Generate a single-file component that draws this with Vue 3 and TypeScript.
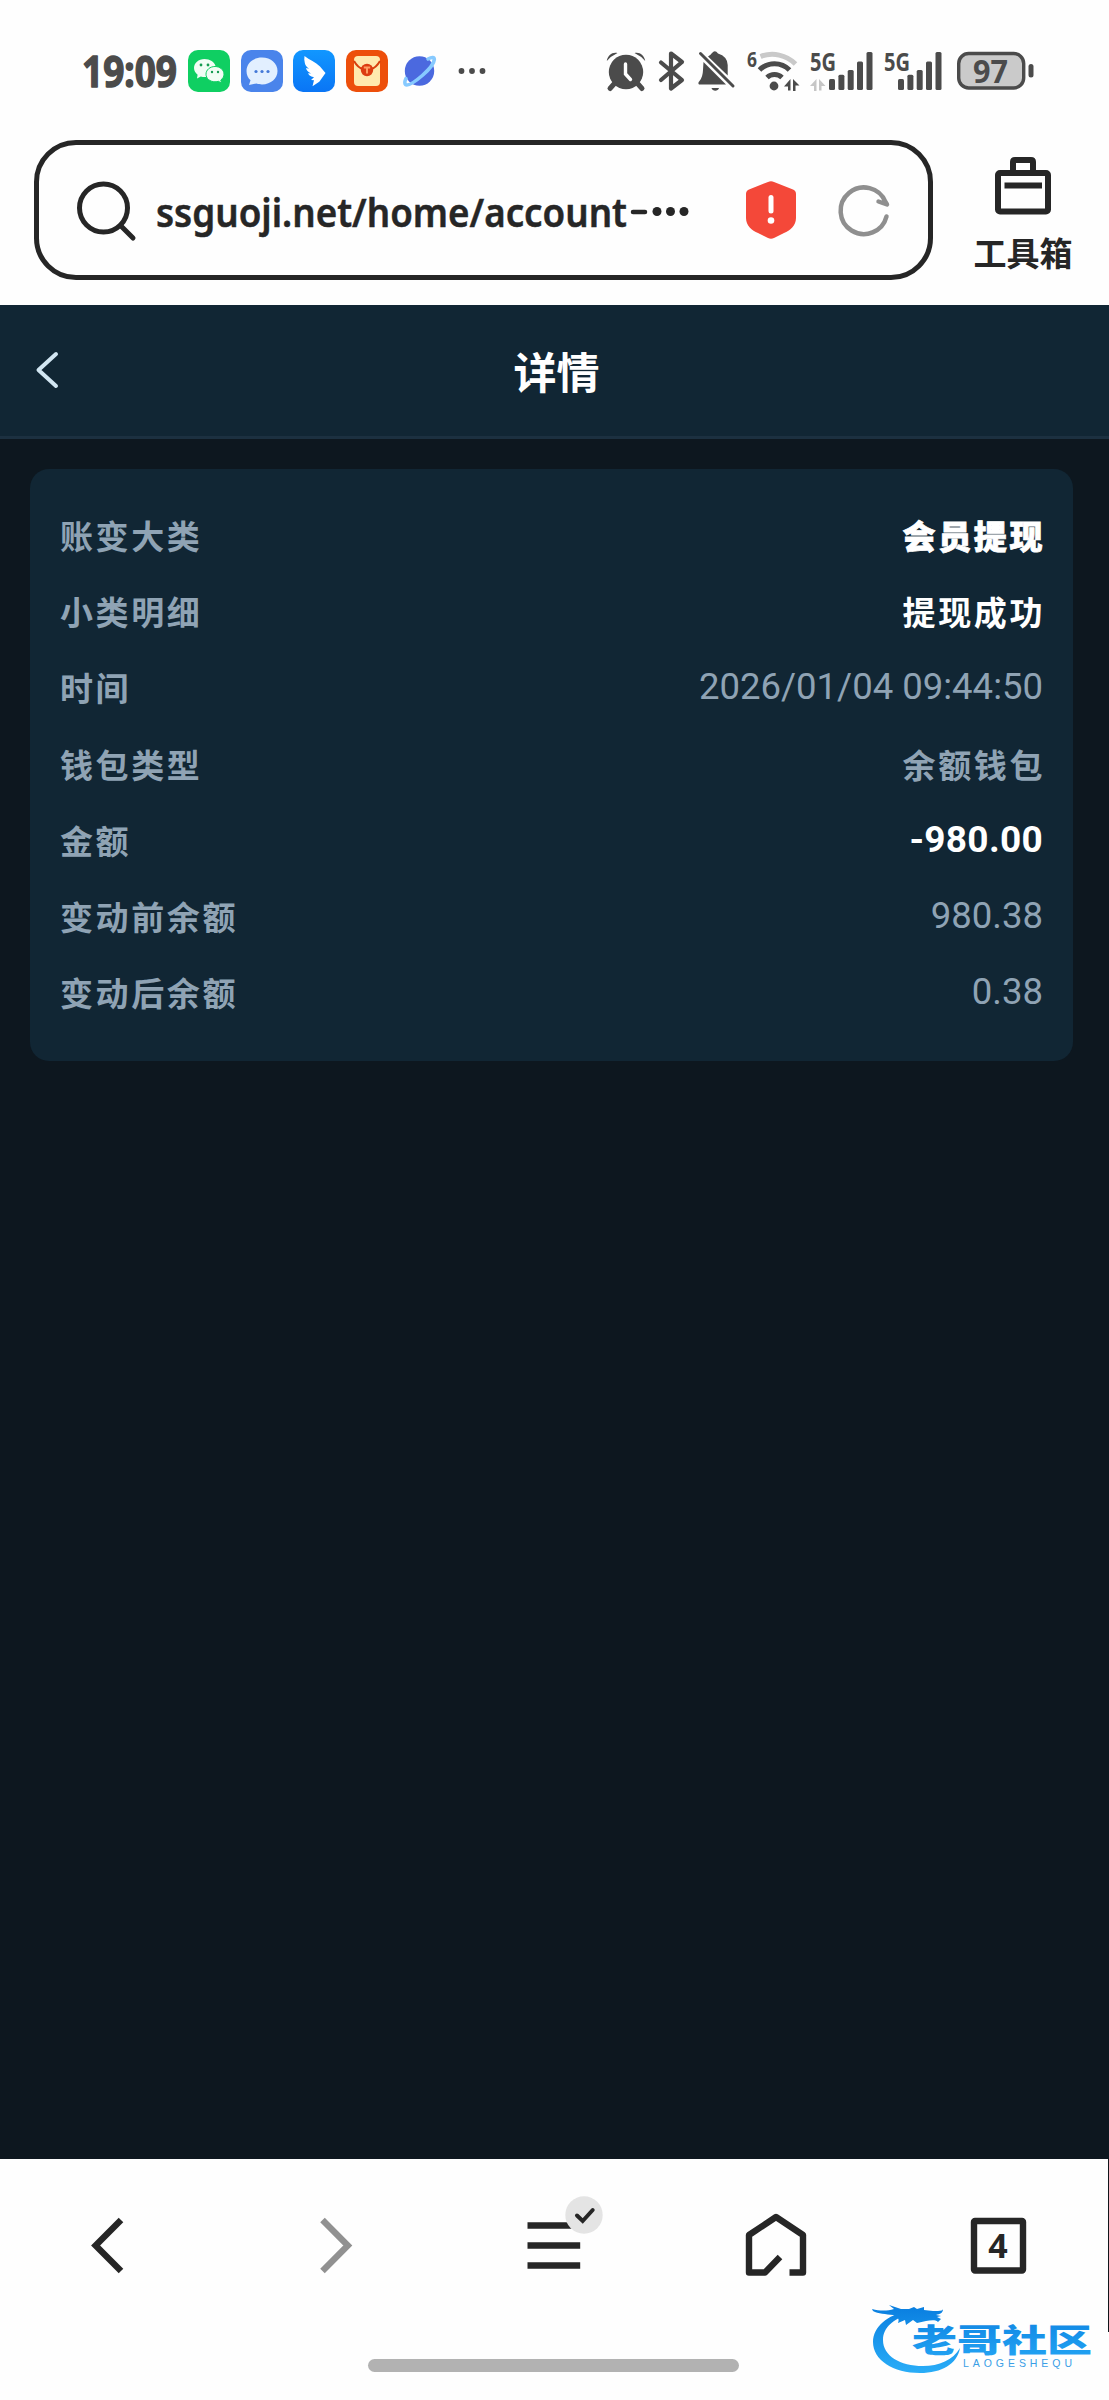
<script setup lang="ts">
interface DetailRow { label: string; value: string; kind: 'text' | 'num'; tone?: 'heavy' | 'strong' }

const rows: DetailRow[] = [
  { label: '账变大类', value: '会员提现', kind: 'text', tone: 'heavy' },
  { label: '小类明细', value: '提现成功', kind: 'text', tone: 'strong' },
  { label: '时间', value: '2026/01/04 09:44:50', kind: 'num' },
  { label: '钱包类型', value: '余额钱包', kind: 'text' },
  { label: '金额', value: '-980.00', kind: 'num', tone: 'strong' },
  { label: '变动前余额', value: '980.38', kind: 'num' },
  { label: '变动后余额', value: '0.38', kind: 'num' },
]

// signal bars: x offset and top edge
const bars = [
  { x: 0, y: 29 },
  { x: 9.4, y: 24.7 },
  { x: 18.7, y: 20 },
  { x: 28, y: 11.5 },
  { x: 37.5, y: 2 },
]
</script>

<template>
  <div class="phone">
    <div class="status">
      <svg class="clock" width="105" height="42" viewBox="0 0 105 42">
        <text x="-1" y="36.500" textLength="95" lengthAdjust="spacingAndGlyphs">19:09</text>
      </svg>
      <div class="apps">
        <svg width="42" height="42" viewBox="0 0 42 42">
          <rect width="42" height="42" rx="10" fill="#0fcf62" />
          <path d="M16.500 9C10.500 9 6 13 6 18c0 3 1.500 5 3.600 6.700L9 28.500l3.800-2c4 1.200 8 .5 10.500-1.500 4-2.500 4.700-6 4.200-9C26.500 12 22 9 16.500 9z" fill="#f2fdf5" />
          <path d="M27 16.500c-5 0-9 3.400-9 7.700s4 7.600 9 7.600c1.200 0 2.400-.2 3.400-.5l3.200 1.900-.8-3.200c2-1.400 3.200-3.400 3.200-5.800 0-4.300-4-7.700-9-7.700z" fill="#f2fdf5" stroke="#0fcf62" stroke-width="1" />
          <g fill="#159b50">
            <circle cx="13" cy="15" r="1.400" /><circle cx="20" cy="15" r="1.400" />
            <circle cx="24" cy="22" r="1.200" /><circle cx="30" cy="22" r="1.200" />
          </g>
        </svg>
        <svg width="42" height="42" viewBox="0 0 42 42">
          <rect width="42" height="42" rx="10" fill="#4a84eb" />
          <path d="M21 7.500C12 7.500 5.500 13.500 5.500 21c0 4 1.500 7 4 9.300L8 35l7.500-1.500c2 .7 3.700.9 5.500.9 9 0 15.500-6 15.500-13.400S30 7.500 21 7.500z" fill="#e2efff" />
          <g fill="#4478d8"><circle cx="15" cy="21.500" r="1.600" /><circle cx="21" cy="21.500" r="1.600" /><circle cx="27" cy="21.500" r="1.600" /></g>
        </svg>
        <svg width="42" height="42" viewBox="0 0 42 42">
          <defs>
            <linearGradient id="ding" x1="0" y1="0" x2="0" y2="1">
              <stop offset="0" stop-color="#1197ff" /><stop offset="1" stop-color="#0a75f5" />
            </linearGradient>
          </defs>
          <rect width="42" height="42" rx="10" fill="url(#ding)" />
          <path d="M11.500 6c5 4 11 6 15.500 10.500l5.500 6.500-6 8.500-1 .8-6 4 1.500-6-3-.3 3-2.800c-4-1-5.500-2.500-6-4l3 .3c-3-1.500-4.700-3.500-5-5.500l3 .8c-2.700-2-4-4-4.200-6-.6-2.300-.7-4.500-.3-6.800z" fill="#fff" />
        </svg>
        <svg width="42" height="42" viewBox="0 0 42 42">
          <rect width="42" height="42" rx="10" fill="#ed4f0b" />
          <rect x="8" y="6" width="26" height="30" rx="4" fill="#ffe9ae" />
          <path d="M8 11q4 7 9 8M34 11q-4 7-9 8" stroke="#d8400e" stroke-width="2" fill="none" />
          <circle cx="21" cy="20" r="6.200" fill="#dc3c10" />
          <path d="M17.800 17.500h6.400M21 17.500v6" stroke="#ff9d61" stroke-width="2" />
        </svg>
        <svg width="42" height="42" viewBox="0 0 42 42">
          <circle cx="20.500" cy="21" r="14.700" fill="#4b69df" />
          <path d="M29 9c4-2.200 6.300-2 6.300.5-.3 4-6.300 11-12 16-7 6-14.300 11-16.800 9-1.500-1.600-.4-4.200.5-6" fill="none" stroke="#87caff" stroke-width="3.600" stroke-linecap="round" />
        </svg>
        <svg width="42" height="42" viewBox="0 0 42 42" fill="#4b4b4b">
          <circle cx="10.500" cy="21" r="2.900" /><circle cx="21" cy="21" r="2.900" /><circle cx="31.500" cy="21" r="2.900" />
        </svg>
      </div>

      <div class="sys">
        <svg width="40" height="42" viewBox="0 0 40 42">
          <circle cx="20" cy="22" r="17.200" />
          <path d="M0.800 11C1.500 5 7 1.500 11.500 3Q5 6 .8 11zM39.200 11C38.500 5 33 1.500 28.500 3Q35 6 39.200 11z" />
          <path d="M8 34l-4 4.500M32 34l4 4.500" class="line" stroke-width="5" />
          <path d="M19.500 14v10l5 5.500" fill="none" stroke="#fff" stroke-width="3.400" stroke-linecap="round" />
        </svg>
        <svg class="bt" width="28" height="42" viewBox="0 0 28 42">
          <path d="M3 12.500L24 30 13 38.500V3.500L24 12 3 30" class="line" stroke-width="4.200" stroke-linejoin="round" />
        </svg>
        <svg class="bell" width="38" height="42" viewBox="0 0 38 42">
          <path d="M10 6.500Q13 4.500 14 3Q17-.5 20 3.500Q29.500 6.500 29.700 15V25.500z" />
          <path d="M5.500 12L28 34.500H1Q-.5 33 1.500 31Q4.800 27 5 20z" />
          <path d="M13.500 38h7.500c-1 3.500-6.500 3.500-7.500 0z" />
          <path d="M2.500 3.500L35 36" class="line" stroke-width="3" />
        </svg>
        <svg class="wifi" width="54" height="42" viewBox="0 0 54 42">
          <text x="0" y="17" font-size="22" textLength="10" lengthAdjust="spacingAndGlyphs">6</text>
          <path d="M13.500 6.500a33 33 0 0 1 35 7.500" fill="none" stroke="#c9c9c9" stroke-width="5" />
          <path d="M12.500 20a21 21 0 0 1 30 0" class="butt" stroke-width="5" />
          <path d="M20 27.500a11 11 0 0 1 15 0" class="butt" stroke-width="5" />
          <circle cx="27" cy="36" r="4.400" />
          <path d="M37 36.500l6.500-7.500V40.500H41V36.500zM46 29l6.500 6.500H48.500V41H46z" />
        </svg>
        <svg class="sig1" width="64" height="42" viewBox="0 0 64 42">
          <text x="0" y="20.500" font-size="25" textLength="26" lengthAdjust="spacingAndGlyphs">5G</text>
          <path d="M0 36l6.500-7V41H4V36zM9 29l6.500 7H11.500V40.500H9z" fill="#c6c6c6" />
          <g transform="translate(19 0)">
            <rect v-for="b in bars" :key="b.x" :x="b.x" :y="b.y" width="6" :height="40 - b.y" rx="1.500" />
          </g>
        </svg>
        <svg class="sig2" width="60" height="42" viewBox="0 0 60 42">
          <text x="0" y="20.500" font-size="25" textLength="26" lengthAdjust="spacingAndGlyphs">5G</text>
          <g transform="translate(14 0)">
            <rect v-for="b in bars" :key="b.x" :x="b.x" :y="b.y" width="6" :height="40 - b.y" rx="1.500" />
          </g>
        </svg>
        <svg class="bat" width="78" height="42" viewBox="0 0 78 42">
          <rect x="1.700" y="3.500" width="65" height="34.500" rx="10" fill="#cacaca" stroke="#4b4b4b" stroke-width="3.400" />
          <rect x="71.500" y="14" width="5" height="13.500" rx="2.500" />
          <text x="16" y="33" font-size="33" textLength="35" lengthAdjust="spacingAndGlyphs">97</text>
        </svg>
      </div>
    </div>

    <div class="browser">
      <div class="urlbar">
        <svg class="search" width="62" height="62" viewBox="0 0 62 62">
          <circle cx="28.500" cy="29" r="24" /><path d="M45.500 46.500L58 59" />
        </svg>
        <svg class="url" width="535" height="60" viewBox="0 0 535 60">
          <text x="-1" y="47" textLength="471" lengthAdjust="spacingAndGlyphs">ssguoji.net/home/account</text>
          <path d="M476 32h12" stroke="#262626" stroke-width="4.500" stroke-linecap="round" />
          <circle cx="500" cy="31.500" r="4.500" /><circle cx="513.500" cy="31.500" r="4.500" /><circle cx="527" cy="31.500" r="4.500" />
        </svg>
        <svg class="shield" width="50" height="58" viewBox="0 0 50 58">
          <path d="M22 1q3-1.500 6 0l19 7.500q3 1.300 3 4.500v24c0 8-6 12.500-12 15l-10 5q-3 1.500-6 0l-10-5C6 49.500 0 45 0 37V13q0-3.200 3-4.500z" fill="#f44839" />
          <path d="M25 16.500v13.500" stroke="#fff" stroke-width="5" stroke-linecap="round" />
          <circle cx="25" cy="39.500" r="3.300" fill="#fff" />
        </svg>
        <svg class="reload" width="52" height="54" viewBox="0 0 52 54">
          <path d="M47.500 33.500A23.300 23.300 0 1 1 46.500 19L48 21.500 39.500 18.500" />
        </svg>
      </div>
      <div class="toolbox">
        <svg width="56" height="57" viewBox="0 0 56 57">
          <rect x="3" y="16" width="50" height="38.500" rx="2" />
          <path d="M18 15V5q0-2 2-2h16q2 0 2 2v10M9.500 28.500H47" />
        </svg>
        <span>工具箱</span>
      </div>
    </div>

    <header class="header">
      <svg width="26" height="40" viewBox="0 0 26 40"><path d="M22 4L4.500 20l17.500 16" /></svg>
      <h1>详情</h1>
    </header>

    <main class="page">
      <div class="card">
        <div v-for="r in rows" :key="r.label" class="row">
          <span class="label">{{ r.label }}</span>
          <span class="value" :class="[r.kind, r.tone]">{{ r.value }}</span>
        </div>
      </div>
    </main>

    <nav class="nav">
      <svg width="80" height="90" viewBox="0 0 80 90">
        <path d="M50 20L24.600 45.500 50 71" />
      </svg>
      <svg class="fwd" width="80" height="90" viewBox="0 0 80 90">
        <path d="M29.500 20L54.800 45.500 29.500 71" />
      </svg>
      <svg width="100" height="90" viewBox="0 0 100 90">
        <path d="M23.500 25.500h52.700M23.500 45.500h52.700M23.500 65.500h52.700" />
        <circle class="badge" cx="80" cy="15" r="18.700" />
        <path d="M73 15.500l5.700 5.500 10-11" class="check" />
      </svg>
      <svg width="80" height="90" viewBox="0 0 80 90">
        <path d="M53.500 72.500H67V35L40 17 13 35v37.500h16L44 57" stroke-linejoin="round" />
      </svg>
      <svg width="80" height="90" viewBox="0 0 80 90">
        <rect x="16" y="21" width="49" height="49.500" rx="1" />
        <text x="40" y="58" text-anchor="middle">4</text>
      </svg>
    </nav>
    <div class="gesture"></div>

    <div class="edge"></div>
    <svg class="mark" width="230" height="76" viewBox="0 0 230 76">
      <defs>
        <linearGradient id="mk" gradientUnits="userSpaceOnUse" x1="0" y1="5" x2="0" y2="72">
          <stop offset="0" stop-color="#0a7fe0" /><stop offset="1" stop-color="#2aaef8" />
        </linearGradient>
      </defs>
      <path d="M36 10C17 12 2 25 2 40c0 18 20 31 47 31 22 0 37-9 40-25-7 12-21 18-37 18-23 0-40-10-40-26 0-13 11-21 24-25z" fill="url(#mk)" />
      <path d="M1 7c8 2 15 2 22 0l-5-4 12 4 8 0 5-2 3 2 7-2 0 3 9 1 5 0c3 0 5-1 5-2 0 4-3 5-7 6l5 1-4 1 4 2-3 3c-4-3-8-1-12-1l-9 2-4-3-7 5-1-5-7 3c2-5-1-6-5-8-7-1-15-1-20-4z" fill="url(#mk)" />
      <text class="mark-cn" x="41" y="50" textLength="180" lengthAdjust="spacingAndGlyphs" fill="url(#mk)">老哥社区</text>
      <text class="mark-en" x="92" y="65" textLength="109" fill="#3a9fe6">LAOGESHEQU</text>
    </svg>
  </div>
</template>

<style>
body {
  margin: 0;
  background: #fefefe;
}
</style>

<style scoped>
.phone {
  position: relative;
  width: 1109px;
  height: 2400px;
  overflow: hidden;
  display: flex;
  flex-direction: column;
  background: #fefefe;
  font-family: Roboto, "Noto Sans CJK SC", sans-serif;
}
svg { display: block; flex: none; overflow: visible; }

.status {
  display: flex;
  height: 42px;
  padding: 50px 74px 48px 83px;
}
.clock text {
  font: 700 43px "Noto Sans", sans-serif;
  fill: #4b4b4b;
  stroke: #4b4b4b;
  stroke-width: 1.4px;
  stroke-linejoin: round;
}
.apps { display: flex; gap: 10.7px; }
.sys {
  display: flex;
  margin-left: auto;
  fill: #4b4b4b;
}
.sys text { font-family: "Noto Sans", sans-serif; font-weight: 700; }
.line { fill: none; stroke: #4b4b4b; stroke-linecap: round; }
.butt { fill: none; stroke: #4b4b4b; }
.bt { margin-left: 12px; }
.bell { margin-left: 12px; }
.wifi { margin-left: 11px; }
.sig1 { margin-left: 9px; }
.sig2 { margin-left: 10px; }
.bat { margin-left: 13px; }

.browser {
  display: flex;
  height: 165px;
  padding-left: 34px;
}
.urlbar {
  box-sizing: border-box;
  display: flex;
  flex: none;
  align-items: center;
  width: 899px;
  height: 140px;
  padding-left: 36px;
  border: 5px solid #262626;
  border-radius: 42px;
}
.search, .reload { fill: none; stroke: #262626; stroke-width: 5; stroke-linecap: round; }
.url { margin-left: 20px; fill: #262626; }
.url text {
  font: 600 40px "Noto Sans", sans-serif;
  stroke: #262626;
  stroke-width: 0.5px;
}
.shield { margin-left: 54px; }
.reload { margin-left: 43px; stroke: #8f8f8f; stroke-width: 4.5; stroke-linejoin: round; }
.toolbox {
  display: flex;
  flex-direction: column;
  align-items: center;
  width: 100px;
  margin-left: 40px;
  padding-top: 17px;
}
.toolbox svg { fill: none; stroke: #262626; stroke-width: 6; }
.toolbox span {
  margin-top: 19px;
  font-size: 33px;
  font-weight: 700;
  line-height: 44px;
  white-space: nowrap;
  color: #262626;
}

.header {
  box-sizing: border-box;
  display: flex;
  align-items: center;
  height: 133.5px;
  padding: 0 32px 0 34px;
  background: #112634;
  border-bottom: 3px solid #1c3040;
}
.header svg { fill: none; stroke: #d2e6f2; stroke-width: 4; stroke-linecap: round; stroke-linejoin: round; }
.header h1 {
  flex: 1;
  margin: 8px 24px 0 0;
  font-size: 43px;
  font-weight: 700;
  line-height: 60px;
  text-align: center;
  color: #fff;
}

.page {
  box-sizing: border-box;
  height: 1720.5px;
  padding: 30px 36px 0 30px;
  background: #0d171f;
}
.card {
  box-sizing: border-box;
  height: 592px;
  padding: 31.5px 30px 0;
  border-radius: 19px;
  background: #112634;
}
.row {
  display: flex;
  justify-content: space-between;
  height: 76.2px;
  line-height: 76px;
  color: #8fa3b4;
}
.label, .text {
  font-size: 33px;
  font-weight: 700;
  letter-spacing: 2.6px;
}
.text { margin-right: -2px; }
.num {
  margin-top: -3px;
  font-size: 36.5px;
  font-weight: 400;
}
.strong, .heavy { color: #fff; }
.num.strong { font-size: 37px; font-weight: 700; letter-spacing: 0.3px; }
.heavy { font-weight: 900; -webkit-text-stroke: 0.8px #fff; }

.nav {
  display: grid;
  grid-template-columns: repeat(5, 1fr);
  justify-items: center;
  padding-top: 41px;
}
.nav svg { fill: none; stroke: #262626; stroke-width: 6.4; }
.nav .fwd { stroke: #919191; }
.nav .badge { fill: #e4e4e4; stroke: none; }
.nav .check { stroke-width: 4; stroke-linecap: round; }
.nav text { font: 700 34px "Noto Sans", sans-serif; fill: #262626; stroke: none; }
.gesture {
  width: 371px;
  height: 12.5px;
  margin: 69px 0 0 368px;
  border-radius: 7px;
  background: #b2b2b2;
}

.edge {
  position: absolute;
  right: 0;
  top: 2159px;
  width: 1px;
  height: 173px;
  background: #10151a;
}
.mark {
  position: absolute;
  left: 871px;
  top: 2302px;
}
.mark-cn { font: 900 32px "Noto Sans CJK SC", sans-serif; }
.mark-en { font: 400 10.5px "Liberation Sans", sans-serif; }
</style>
